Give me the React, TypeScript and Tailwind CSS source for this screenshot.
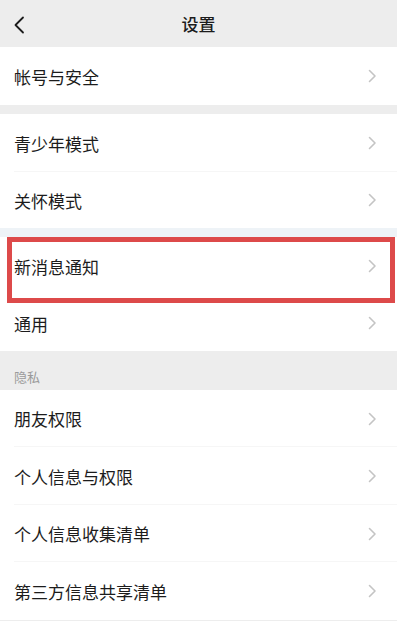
const font = { fontFamily: '"Noto Sans CJK SC", "Noto Sans", sans-serif' };

function Chevron() {
  return (
    <svg width="9" height="14" viewBox="0 0 9 14" fill="none" className="shrink-0">
      <path d="M1.5 1.5 L7 7 L1.5 12.5" stroke="#c4c4c4" strokeWidth="1.6" strokeLinecap="round" strokeLinejoin="round" />
    </svg>
  );
}

function Row({ label, h = 'h-[58px]', divider = false }: { label: string; h?: string; divider?: boolean }) {
  return (
    <div className={`relative flex items-center justify-between bg-white pl-[14px] pr-[20px] ${h}`}>
      <span className="text-[17px] leading-none text-[#1c1c1c]">{label}</span>
      <Chevron />
      {divider && <div className="absolute bottom-0 left-[14px] right-0 h-px bg-[#f6f6f6]" />}
    </div>
  );
}

export default function App() {
  return (
    <div className="flex h-[621px] w-[397px] flex-col overflow-hidden bg-[#ededed]" style={font}>
      {/* Header */}
      <div className="relative flex h-[47px] items-center justify-center bg-[#ededed]">
        <svg width="12" height="18" viewBox="0 0 12 18" fill="none" className="absolute left-[13px] top-[16px]">
          <path d="M10 1.5 L2.5 9 L10 16.5" stroke="#1c1c1c" strokeWidth="1.8" strokeLinecap="round" strokeLinejoin="round" />
        </svg>
        <span className="text-[17px] font-medium text-[#1c1c1c]">设置</span>
      </div>

      <Row label="帐号与安全" />
      <div className="h-[9px] bg-[#ededed]" />

      <Row label="青少年模式" divider />
      <Row label="关怀模式" h="h-[56px]" />
      <div className="h-[9px] bg-[#eef3f7]" />

      <div className="relative z-10">
        <Row label="新消息通知" />
        <div className="pointer-events-none absolute left-[7px] right-[2px] top-0 z-10 h-[66px] border-[5px] border-[#dd4a4a]" />
      </div>
      <Row label="通用" h="h-[56px]" />

      <div className="flex h-[39px] items-center bg-[#ededed] pl-[14px] pt-[11px]">
        <span className="text-[13px] leading-none text-[#9b9b9b]">隐私</span>
      </div>

      <Row label="朋友权限" h="h-[57px]" divider />
      <Row label="个人信息与权限" divider />
      <Row label="个人信息收集清单" h="h-[57px]" divider />
      <Row label="第三方信息共享清单" />
    </div>
  );
}
